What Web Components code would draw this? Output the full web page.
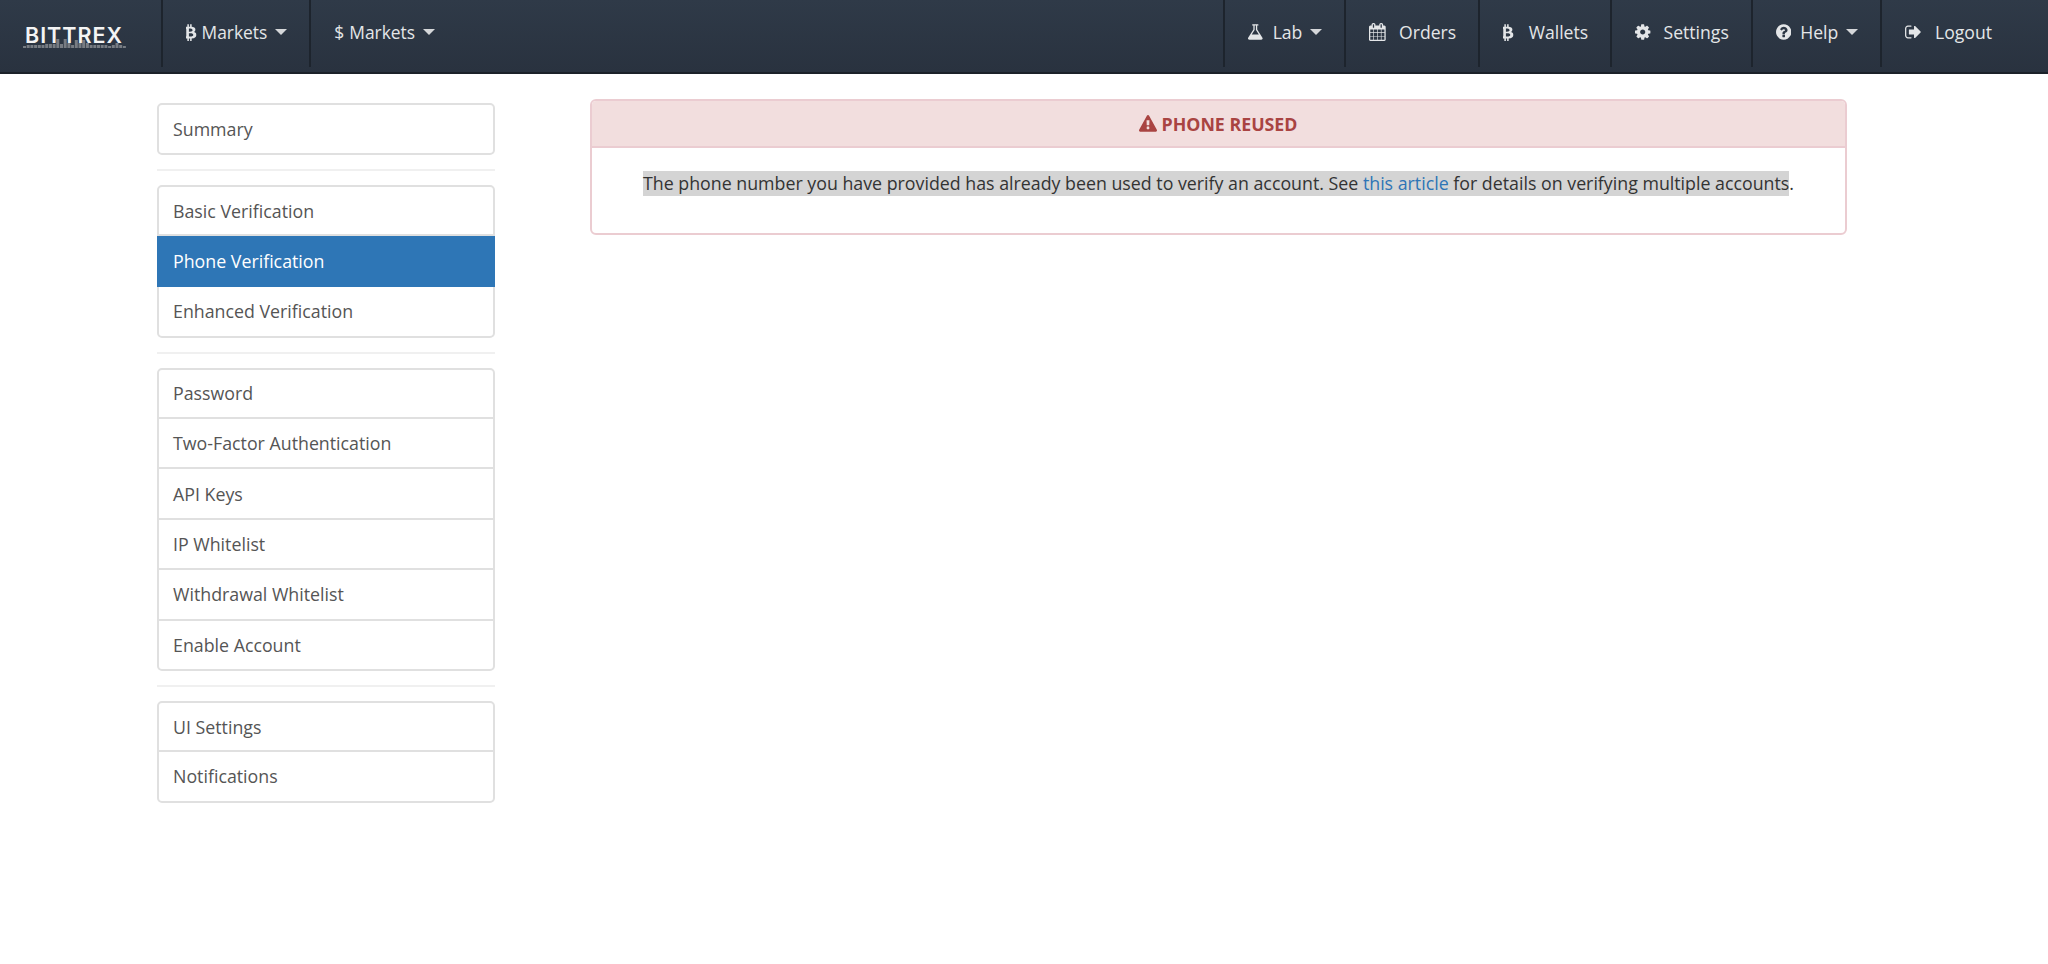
<!DOCTYPE html>
<html>
<head>
<meta charset="utf-8">
<title>Bittrex</title>
<style>
  html, body { margin: 0; padding: 0; background: #fff; }
  body { font-family: "Open Sans", "Liberation Sans", sans-serif; font-size: 17.8px; color: #333; height: 964px; overflow: hidden; }
  .sel { background: #d4d4d4; padding-bottom: 1px; }
  .sel a { color: #2e75b6; text-decoration: none; }
</style>
</head>
<body>
<bx-navbar>
  <bx-logo slot="brand"></bx-logo>
  <bx-nav-item slot="left" icon="btc" caret gap="5" style="font-size:17.4px">Markets</bx-nav-item>
  <bx-nav-item slot="left" icon="usd" caret gap="5" style="font-size:17.4px">Markets</bx-nav-item>
  <bx-nav-item slot="right" icon="flask" caret gap="10">Lab</bx-nav-item>
  <bx-nav-item slot="right" icon="calendar" gap="13">Orders</bx-nav-item>
  <bx-nav-item slot="right" icon="btc" gap="15">Wallets</bx-nav-item>
  <bx-nav-item slot="right" icon="cog" gap="13">Settings</bx-nav-item>
  <bx-nav-item slot="right" icon="question" caret gap="9">Help</bx-nav-item>
  <bx-nav-item slot="right" icon="signout" gap="14" wide>Logout</bx-nav-item>
</bx-navbar>

<bx-page>
  <bx-side-menu slot="side">
    <bx-list-group>
      <bx-list-item>Summary</bx-list-item>
    </bx-list-group>
    <bx-list-group>
      <bx-list-item>Basic Verification</bx-list-item>
      <bx-list-item active>Phone Verification</bx-list-item>
      <bx-list-item>Enhanced Verification</bx-list-item>
    </bx-list-group>
    <bx-list-group>
      <bx-list-item>Password</bx-list-item>
      <bx-list-item>Two-Factor Authentication</bx-list-item>
      <bx-list-item>API Keys</bx-list-item>
      <bx-list-item>IP Whitelist</bx-list-item>
      <bx-list-item>Withdrawal Whitelist</bx-list-item>
      <bx-list-item>Enable Account</bx-list-item>
    </bx-list-group>
    <bx-list-group>
      <bx-list-item>UI Settings</bx-list-item>
      <bx-list-item>Notifications</bx-list-item>
    </bx-list-group>
  </bx-side-menu>
  <bx-alert-panel heading="PHONE REUSED">
    <span class="sel">The phone number you have provided has already been used to verify an account. See <a href="#">this article</a> for details on verifying multiple accounts</span>.
  </bx-alert-panel>
</bx-page>

<script>
// x offset and width of each glyph inside its 1792 box
const ICONS = {
  btc: [230, 1050, 'M1167 640q18 182-131 258 117 28 175 103t45 214q-7 71-32.5 125t-64.5 89-97 58.5-121.5 34.5-145.5 15v255h-154v-251q-80 0-122-1v252h-154v-255q-18 0-54-.5t-55-.5h-200l31-183h111q50 0 58-51v-402h16q-6-1-16-1v-287q-13-68-89-68h-111v-164l212 1q64 0 97-1v-252h154v247q82-2 122-2v-245h154v252q79 7 140 22.5t113 45 82.5 78 36.5 114.5zm-215 545q0-36-15-64t-37-46-57.5-30.5-65.5-18.5-74-9-69-3-64.5 1-47.5 1v338q8 0 37 .5t48 .5 53-1.5 58.5-4 57-8.5 55.5-14 47.5-21 39.5-30 24.5-40 9.5-51zm-71-476q0-33-12.5-58.5t-30.5-42-48-28-55-16.5-61.5-8-58-2.5-54 1-39.5.5v307q5 0 34.5.5t46.5 0 50-2 55-5.5 51.5-11 48.5-18.5 37-27 27-38.5 9-51z'],
  flask: [170, 1452, 'M1591 1448q56 89 21.5 152.5t-140.5 63.5h-1152q-106 0-140.5-63.5t21.5-152.5l503-793v-399h-64q-26 0-45-19t-19-45 19-45 45-19h512q26 0 45 19t19 45-19 45-45 19h-64v399zm-779-725l-272 429h712l-272-429-20-31v-436h-128v436z'],
  calendar: [64, 1664, 'M192 1664h288v-288h-288v288zm352 0h320v-288h-320v288zm-352-352h288v-320h-288v320zm352 0h320v-320h-320v320zm-352-384h288v-288h-288v288zm736 736h320v-288h-320v288zm-384-736h320v-288h-320v288zm768 736h288v-288h-288v288zm-384-352h320v-320h-320v320zm-352-864v-288q0-13-9.5-22.5t-22.5-9.5h-64q-13 0-22.5 9.5t-9.5 22.5v288q0 13 9.5 22.5t22.5 9.5h64q13 0 22.5-9.5t9.5-22.5zm736 864h288v-320h-288v320zm-384-384h320v-288h-320v288zm384 0h288v-288h-288v288zm32-480v-288q0-13-9.5-22.5t-22.5-9.5h-64q-13 0-22.5 9.5t-9.5 22.5v288q0 13 9.5 22.5t22.5 9.5h64q13 0 22.5-9.5t9.5-22.5zm384-64v1280q0 52-38 90t-90 38h-1408q-52 0-90-38t-38-90v-1280q0-52 38-90t90-38h128v-96q0-66 47-113t113-47h64q66 0 113 47t47 113v96h384v-96q0-66 47-113t113-47h64q66 0 113 47t47 113v96h128q52 0 90 38t38 90z'],
  cog: [128, 1536, 'M1152 896q0-106-75-181t-181-75-181 75-75 181 75 181 181 75 181-75 75-181zm512-109v222q0 12-8 23t-20 13l-185 28q-19 54-39 91 35 50 107 138 10 12 10 25t-9 23q-27 37-99 108t-94 71q-12 0-26-9l-138-108q-44 23-91 38-16 136-29 186-7 28-36 28h-222q-14 0-24.5-8.5t-11.5-21.5l-28-184q-49-16-90-37l-141 107q-10 9-25 9-14 0-25-11-126-114-165-168-7-10-7-23 0-12 8-23 15-21 51-66.5t54-70.5q-27-50-41-99l-183-27q-13-2-21-12.5t-8-23.5v-222q0-12 8-23t19-13l186-28q14-46 39-92-40-57-107-138-10-12-10-24 0-10 9-23 26-36 98.5-107.5t94.5-71.5q13 0 26 10l138 107q44-23 91-38 16-136 29-186 7-28 36-28h222q14 0 24.5 8.5t11.5 21.5l28 184q49 16 90 37l142-107q9-9 24-9 13 0 25 10 129 119 165 170 7 8 7 22 0 12-8 23-15 21-51 66.5t-54 70.5q26 50 41 98l183 28q13 2 21 12.5t8 23.5z'],
  question: [128, 1536, 'M1024 1376v-192q0-14-9-23t-23-9h-192q-14 0-23 9t-9 23v192q0 14 9 23t23 9h192q14 0 23-9t9-23zm256-672q0-88-55.5-163t-138.5-116-170-41q-243 0-371 213-15 24 8 42l132 100q7 6 19 6 16 0 25-12 53-68 86-92 34-24 86-24 48 0 85.5 26t37.5 59q0 38-20 61t-68 45q-63 28-115.5 86.5t-52.5 125.5v36q0 14 9 23t23 9h192q14 0 23-9t9-23q0-19 21.5-49.5t54.5-49.5q32-18 49-28.5t46-35 44.5-48 28-60.5 12.5-81zm384 192q0 209-103 385.5t-279.5 279.5-385.5 103-385.5-103-279.5-279.5-103-385.5 103-385.5 279.5-279.5 385.5-103 385.5 103 279.5 279.5 103 385.5z'],
  signout: [64, 1568, 'M704 1440q0 4 1 20t.5 26.5-3 23.5-10 19.5-20.5 6.5h-320q-119 0-203.5-84.5t-84.5-203.5v-704q0-119 84.5-203.5t203.5-84.5h320q13 0 22.5 9.5t9.5 22.5q0 4 1 20t.5 26.5-3 23.5-10 19.5-20.5 6.5h-320q-66 0-113 47t-47 113v704q0 66 47 113t113 47h312l11.5 1 11.5 3 8 5.5 7 9 2 13.5zm928-544q0 26-19 45l-544 544q-19 19-45 19t-45-19-19-45v-288h-448q-26 0-45-19t-19-45v-384q0-26 19-45t45-19h448v-288q0-26 19-45t45-19 45 19l544 544q19 19 19 45z'],
  warning: [0, 1792, 'M1024 1375v-190q0-14-9.5-23.5t-22.5-9.5h-192q-13 0-22.5 9.5t-9.5 23.5v190q0 14 9.5 23.5t22.5 9.5h192q13 0 22.5-9.5t9.5-23.5zm-2-374l18-459q0-12-10-19-13-11-24-11h-220q-11 0-24 11-10 7-10 21l17 457q0 10 10 16.5t24 6.5h185q14 0 23.5-6.5t10.5-16.5zm-14-934l768 1408q35 63-2 126-17 29-46.5 46t-63.5 17h-1536q-34 0-63.5-17t-46.5-46q-37-63-2-126l768-1408q17-31 47-49t65-18 65 18 47 49z']
};

function svgIcon(name, size) {
  const [x, w, d] = ICONS[name];
  return `<svg width="${(w / 1792 * size).toFixed(1)}" height="${size}" viewBox="${x} 0 ${w} 1792" fill="currentColor"><path d="${d}"/></svg>`;
}

class BxNavbar extends HTMLElement {
  constructor() {
    super();
    this.attachShadow({ mode: "open" });
    this.shadowRoot.innerHTML = `
      <style>
        :host { display: flex; height: 74px; box-sizing: border-box; border-bottom: 2px solid #1b2129;
          background: linear-gradient(to bottom, #2f3a48, #29323f); color: #e4e6e8; }
        .left, .right { display: flex; }
        .right { margin-left: auto; }
      </style>
      <slot name="brand"></slot>
      <div class="left"><slot name="left"></slot></div>
      <div class="right"><slot name="right"></slot></div>`;
  }
}

class BxLogo extends HTMLElement {
  constructor() {
    super();
    this.attachShadow({ mode: "open" });
    let bars = "";
    const hs = [2,3,3,3,3,3,4,4,4,9,4,9,5,3,8,5,8,5,3,3,3,3,3,2,3,5,3,2];
    hs.forEach((h, i) => { bars += `<rect x="${i * 3.7}" y="${10 - h}" width="3" height="${h}"/>`; });
    this.shadowRoot.innerHTML = `
      <style>
        :host { display: block; width: 161px; height: 72px; box-sizing: border-box; padding: 23px 0 0 25px; position: relative; }
        .name { position: relative; font: 600 21.5px/24px Inter, sans-serif; letter-spacing: 1px; color: #f4f4f4; }
        svg { position: absolute; left: 23px; top: 38px; fill: #777c83; }
      </style>
      <svg width="104" height="10">${bars}</svg>
      <div class="name">BITTREX</div>`;
  }
}

class BxNavItem extends HTMLElement {
  connectedCallback() {
    if (this.shadowRoot) return;
    this.attachShadow({ mode: "open" });
    const name = this.getAttribute("icon");
    const gap = this.getAttribute("gap") || 8;
    const icon = name === "usd" ? `<span class="dollar">$</span>` : svgIcon(name, 18);
    const caret = this.hasAttribute("caret") ? `<i class="caret"></i>` : "";
    this.shadowRoot.innerHTML = `
      <style>
        :host { display: block; height: 67px; box-sizing: border-box; border-left: 2px solid #1d242d; color: #e4e6e8; font-size: 17.6px; }
        .in { display: flex; align-items: center; height: 63px; padding: 0 22px 0 23px; white-space: nowrap; }
        :host([wide]) .in { padding-right: 56px; }
        svg, .dollar { display: block; flex: none; margin-right: ${gap}px; }
        .caret { width: 0; height: 0; margin-left: 8px; border-top: 6px solid #d5d7da; border-left: 6px solid transparent; border-right: 6px solid transparent; }
      </style>
      <div class="in">${icon}<span><slot></slot></span>${caret}</div>`;
  }
}

class BxPage extends HTMLElement {
  constructor() {
    super();
    this.attachShadow({ mode: "open" });
    this.shadowRoot.innerHTML = `
      <style>
        :host { display: grid; grid-template-columns: 338px 1257px; column-gap: 95px; padding: 29px 0 0 157px; align-items: start; }
        .main { margin-top: -4px; }
      </style>
      <div class="side"><slot name="side"></slot></div>
      <div class="main"><slot></slot></div>`;
  }
}

class BxSideMenu extends HTMLElement {
  constructor() {
    super();
    this.attachShadow({ mode: "open" });
    this.shadowRoot.innerHTML = `
      <style>
        :host { display: flex; flex-direction: column; }
        ::slotted(bx-list-group:not(:first-child)) { margin-top: 14px; padding-top: 14px; border-top: 2px solid #f0f0f0; }
      </style>
      <slot></slot>`;
  }
}

class BxListGroup extends HTMLElement {
  constructor() {
    super();
    this.attachShadow({ mode: "open" });
    this.shadowRoot.innerHTML = `
      <style>
        :host { display: block; }
        .box { border: 2px solid #e0e0e0; border-radius: 5px; display: flex; flex-direction: column; background: #fff; }
        ::slotted(bx-list-item:not(:first-child)) { border-top: 2px solid #e0e0e0; }
        ::slotted(bx-list-item:first-child) { height: 47.4px; }
        ::slotted(bx-list-item:only-child) { height: 48.4px; }
      </style>
      <div class="box"><slot></slot></div>`;
  }
}

class BxListItem extends HTMLElement {
  constructor() {
    super();
    this.attachShadow({ mode: "open" });
    this.shadowRoot.innerHTML = `
      <style>
        :host { display: flex; align-items: center; box-sizing: border-box; height: 50.4px; padding: 0 14px; color: #555; white-space: nowrap; }
        :host([active]) { position: relative; z-index: 1; background: #2e76b6; color: #fff; margin: -1px -2px -2px; padding: 0 16px; height: 53.4px; }
      </style>
      <slot></slot>`;
  }
}

class BxAlertPanel extends HTMLElement {
  connectedCallback() {
    if (this.shadowRoot) return;
    this.attachShadow({ mode: "open" });
    this.shadowRoot.innerHTML = `
      <style>
        :host { display: block; border: 2px solid #ebccd1; border-radius: 6px; overflow: hidden; background: #fff; }
        .head { display: flex; justify-content: center; align-items: center; gap: 4px; height: 47px; box-sizing: border-box; background: #f2dede; border-bottom: 2px solid #ebccd1; color: #a94442; font-weight: 700; }
        svg { display: block; }
        .body { padding: 23px 30px 32px; text-align: center; line-height: 25px; height: 30px; color: #333; }
      </style>
      <div class="head">${svgIcon("warning", 18)}<span>${this.getAttribute("heading")}</span></div>
      <div class="body"><slot></slot></div>`;
  }
}

customElements.define("bx-navbar", BxNavbar);
customElements.define("bx-logo", BxLogo);
customElements.define("bx-nav-item", BxNavItem);
customElements.define("bx-page", BxPage);
customElements.define("bx-side-menu", BxSideMenu);
customElements.define("bx-list-group", BxListGroup);
customElements.define("bx-list-item", BxListItem);
customElements.define("bx-alert-panel", BxAlertPanel);
</script>
</body>
</html>
